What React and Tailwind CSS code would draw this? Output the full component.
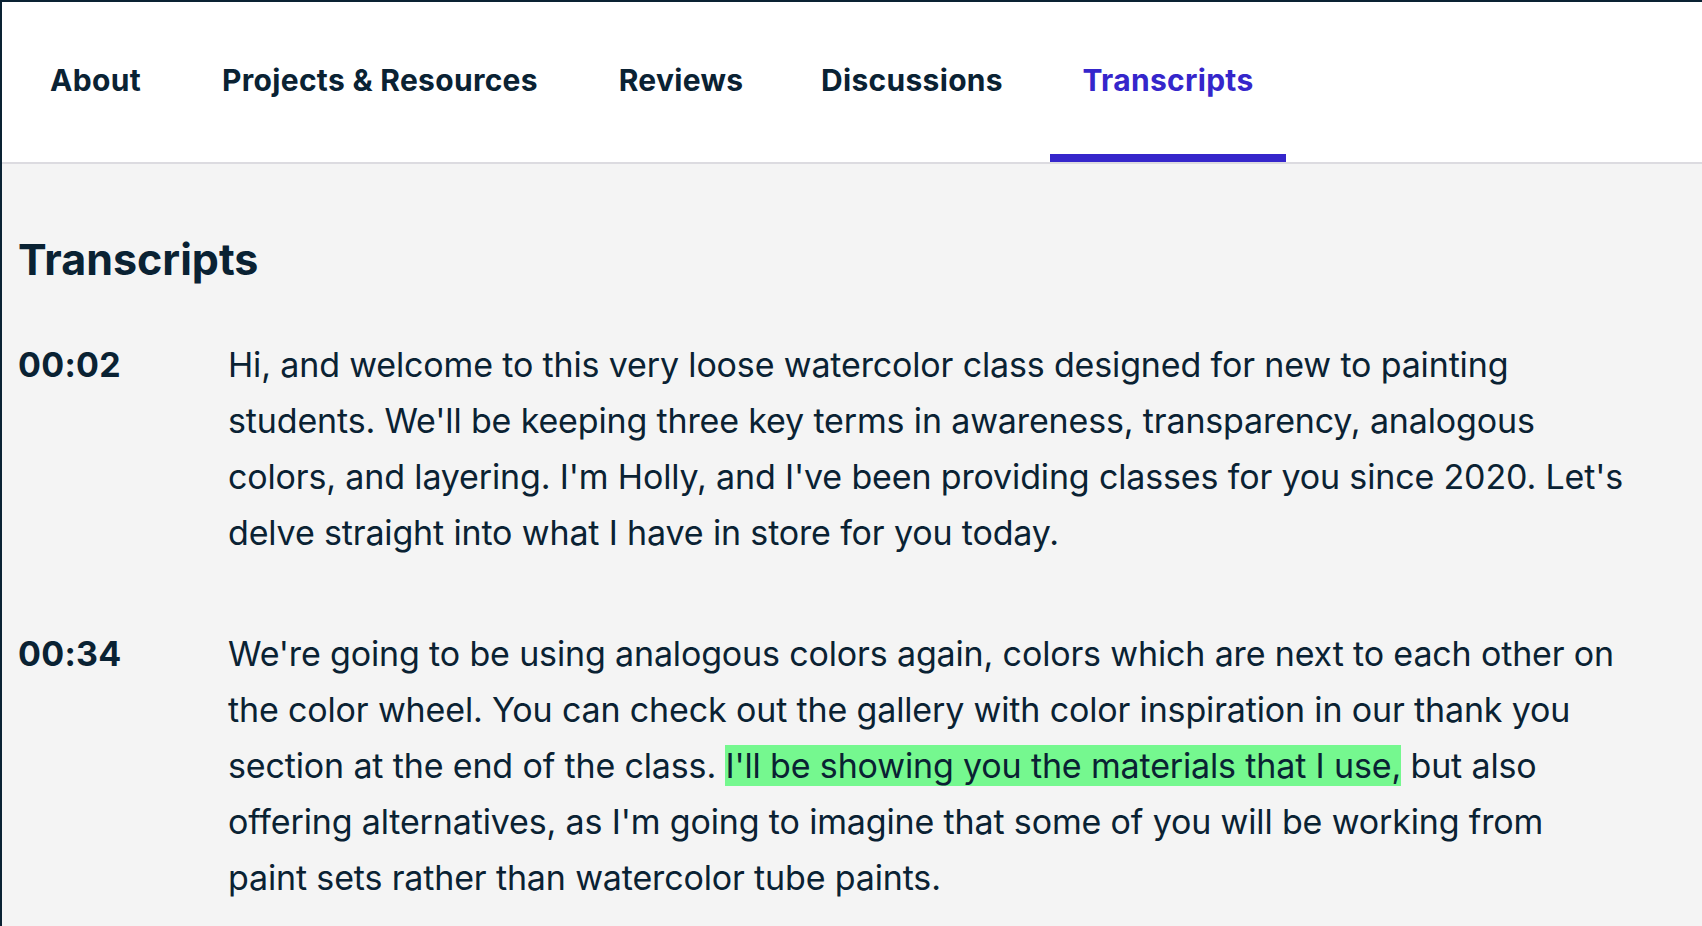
import { useState } from 'react';

const tabs = [
  { label: 'About', width: 'w-[153px]' },
  { label: 'Projects & Resources', width: 'w-[382px]' },
  { label: 'Reviews', width: 'w-[186px]' },
  { label: 'Discussions', width: 'w-[242px]' },
  { label: 'Transcripts', width: 'w-[236px]' }
];

function App() {
  const [active, setActive] = useState('Transcripts');

  return (
    <div
      className="min-h-screen bg-[#f4f4f4] border-t-2 border-l-2 border-[#0a2233] text-[#0a2233]"
      style={{ fontFamily: 'Inter, "Noto Sans", sans-serif' }}>
      {/* Tabs */}
      <div className="bg-white border-b-2 border-[#dcdbe0]">
        <div className="flex gap-[17px] pl-[17px] h-[160px]">
          {tabs.map((tab) => (
            <button
              key={tab.label}
              onClick={() => setActive(tab.label)}
              className={`${tab.width} relative flex items-center justify-center pb-[3px] text-[30px] font-bold tracking-[0.3px] ${
                active === tab.label ? 'text-[#3526cb]' : 'text-[#0a2233]'
              }`}>
              {tab.label}
              {active === tab.label && (
                <span className="absolute left-0 right-0 bottom-0 h-[8px] bg-[#3526cb]" />
              )}
            </button>
          ))}
        </div>
      </div>

      {/* Transcript body */}
      <div className="pl-[16px] pr-[75px] pt-[69px]">
        <h2 className="text-[43px] leading-[52px] font-bold">Transcripts</h2>

        <div className="mt-[52px] flex flex-col gap-[65px]">
          <div className="grid grid-cols-[210px_1fr]">
            <div className="text-[34px] leading-[56px] font-bold tracking-[0.3px]">00:02</div>
            <p className="text-[34px] leading-[56px] tracking-[-0.15px]">
              Hi, and welcome to this very loose watercolor class designed for new to painting
              students. We'll be keeping three key terms in awareness, transparency, analogous
              colors, and layering. I'm Holly, and I've been providing classes for you since 2020.
              Let's delve straight into what I have in store for you today.
            </p>
          </div>

          <div className="grid grid-cols-[210px_1fr]">
            <div className="text-[34px] leading-[56px] font-bold tracking-[0.3px]">00:34</div>
            <p className="text-[34px] leading-[56px] tracking-[-0.15px]">
              We're going to be using analogous colors again, colors which are next to each other
              on the color wheel. You can check out the gallery with color inspiration in our thank
              you section at the end of the class.{' '}
              <span className="bg-[#75f88f]">I'll be showing you the materials that I use,</span>{' '}
              but also offering alternatives, as I'm going to imagine that some of you will be
              working from paint sets rather than watercolor tube paints.
            </p>
          </div>
        </div>
      </div>
    </div>
  );
}

export default App;
